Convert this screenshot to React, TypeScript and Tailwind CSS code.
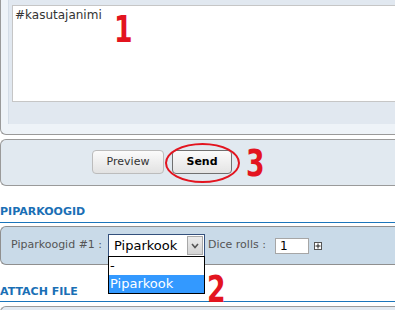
import React from 'react'

const font = { fontFamily: '"DejaVu Sans", Verdana, sans-serif' }

const RedNum = ({ n, className }: { n: string; className: string }) => (
  <span
    className={`absolute text-[38px] leading-none font-bold text-[#e3141f] origin-left scale-x-[0.78] ${className}`}
    style={{ fontFamily: '"DejaVu Sans Condensed", "DejaVu Sans", sans-serif' }}
  >
    {n}
  </span>
)

const Heading = ({ title, className }: { title: string; className: string }) => (
  <div className={`border-b border-[#1b75bb] text-[11px] leading-[13px] font-bold text-[#1a6fb5] ${className}`}>
    {title}
  </div>
)

export default function App() {
  return (
    <div className="relative h-[310px] w-[395px] overflow-hidden bg-white" style={font}>
      {/* Message box */}
      <div className="border-l border-b border-[#9a9a9a] rounded-bl-[6px] bg-[#eef3f8] pl-[7px] pb-[10px]">
        <div className="border-l border-[#d3dce6] bg-[#e1e8f0] pl-[3px] pt-[5px] pb-[22px]">
          <div className="relative h-[97px] border border-r-0 border-[#c6c6c6] bg-white p-[2px] text-[12px] leading-[14px] text-[#333]">
            #kasutajanimi
            <RedNum n="1" className="left-[101px] top-[4px]" />
          </div>
        </div>
      </div>

      {/* Buttons */}
      <div className="relative mt-[4px] flex gap-[8px] border-y border-l border-[#9a9a9a] rounded-l-[6px] bg-[#e1e9f0] pl-[91px] pt-[10px] pb-[11px]">
        <button className="h-[24px] w-[72px] rounded-[4px] border border-[#bcbcbc] bg-gradient-to-b from-[#fbfbfb] to-[#e2e2e2] text-[11px] text-[#333]">
          Preview
        </button>
        <button className="h-[24px] w-[60px] rounded-[4px] border border-[#707070] bg-gradient-to-b from-[#fbfbfb] to-[#e4e4e4] text-[11px] font-bold text-black">
          Send
        </button>
        <div className="absolute left-[164px] top-[3px] h-[40px] w-[75px] rounded-[50%] border-2 border-[#e3141f]" />
        <RedNum n="3" className="left-[245px] top-[4px]" />
      </div>

      <Heading title="PIPARKOOGID" className="mt-[19px] pb-[4px]" />

      {/* Piparkoogid row */}
      <div className="relative mt-[3px] flex h-[39px] items-center border-y border-l border-[#8f8f8f] rounded-l-[6px] bg-[#c9dae8] pl-[10px] text-[11px] text-[#555]">
        <span className="w-[97px]">Piparkoogid #1 :</span>
        <div className="flex h-[23px] w-[97px] items-center border border-[#34507c] bg-white">
          <span className="flex-1 pl-[5px] text-[13px] text-black">Piparkook</span>
          <span className="mr-[1px] flex h-[19px] w-[16px] items-center justify-center border border-[#a8a8a8] bg-gradient-to-b from-[#ececec] to-[#d4d4d4]">
            <svg width="8" height="6" viewBox="0 0 8 6">
              <path d="M1 1 L4 4.5 L7 1" stroke="#555" strokeWidth="1.6" fill="none" />
            </svg>
          </span>
        </div>
        <span className="ml-[3px]">Dice rolls :</span>
        <div className="ml-[9px] h-[16px] w-[34px] border border-[#a6a6a6] bg-white pl-[4px] text-[12px] leading-[14px] text-black">1</div>
        <span className="ml-[5px] flex h-[8px] w-[8px] items-center justify-center border border-[#555] bg-white">
          <svg width="6" height="6" viewBox="0 0 6 6">
            <path d="M3 0.5 V5.5 M0.5 3 H5.5" stroke="#222" strokeWidth="1" />
          </svg>
        </span>

        {/* open dropdown list */}
        <div className="absolute left-[107px] top-[29px] z-10 w-[97px] border border-black bg-white text-[13px] leading-[18px] text-black">
          <div className="pl-[1px]">-</div>
          <div className="bg-[#3399ff] pl-[1px] text-white">Piparkook</div>
        </div>
        <RedNum n="2" className="left-[206px] top-[43px]" />
      </div>

      <Heading title="ATTACH FILE" className="mt-[20px] pb-[3px]" />

      <div className="mt-[4px] h-[20px] border-t border-l border-[#9a9a9a] rounded-tl-[6px] bg-[#e2e9f1]" />
    </div>
  )
}
